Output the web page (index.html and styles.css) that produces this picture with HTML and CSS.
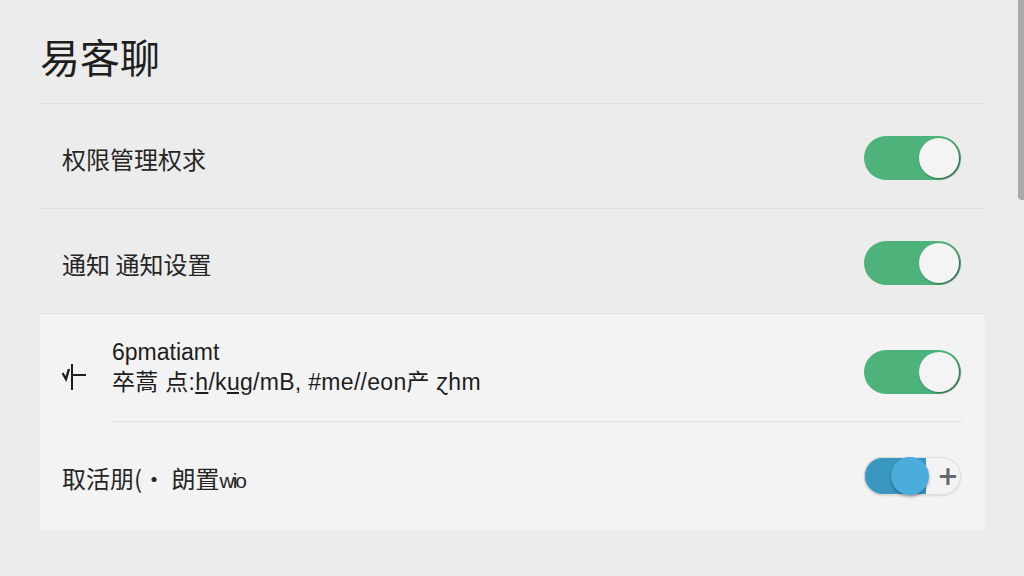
FILE: index.html
```html
<!DOCTYPE html>
<html lang="zh">
<head>
<meta charset="utf-8">
<title>易客聊</title>
<link rel="stylesheet" href="styles.css">
</head>
<body>
<div class="page">
  <header class="title-bar"><h1 class="title">易客聊</h1></header>
  <div class="row">
    <span class="label">权限管理权求</span>
    <span class="toggle on"><span class="knob"></span></span>
  </div>
  <div class="row">
    <span class="label">通知 通知设置</span>
    <span class="toggle on"><span class="knob"></span></span>
  </div>
  <div class="panel">
    <div class="row row-detail">
      <div class="detail">
        <svg class="detail-icon" width="26" height="28" viewBox="0 0 26 28">
          <path d="M0.5 10 L4 16 L7 6" fill="none" stroke="#1e1e1e" stroke-width="2.4" stroke-linejoin="miter"/>
          <path d="M10 1 V27" stroke="#1e1e1e" stroke-width="2"/>
          <path d="M10 12 H24" stroke="#1e1e1e" stroke-width="2"/>
        </svg>
        <div class="detail-text">
          <div class="line1">6pmatiamt</div>
          <div class="line2">卒蒿 点:<u>h</u>/k<u>ug</u>/mB, #me//eon产 ɀhm</div>
        </div>
      </div>
      <span class="toggle on"><span class="knob"></span></span>
    </div>
    <div class="inset-divider"></div>
    <div class="row row-last">
      <span class="label">取活朋(·&nbsp;朗置<span class="latin">wio</span></span>
      <span class="toggle blue"><span class="knob"></span><span class="plus">+</span></span>
    </div>
  </div>
</div>
<div class="scrollbar"></div>
</body>
</html>
```
FILE: styles.css
```css
html, body {
  margin: 0;
  padding: 0;
  background: #ececec;
}
body {
  width: 1024px;
  height: 576px;
  overflow: hidden;
  font-family: "Noto Sans CJK SC", "Liberation Sans", sans-serif;
  color: #262626;
}
.page {
  margin: 0 39px 0 40px;
}
.title-bar {
  box-sizing: border-box;
  height: 104px;
  padding-top: 8px;
  border-bottom: 1px solid #dedede;
  display: flex;
  align-items: center;
}
.title {
  margin: 0;
  font-size: 40px;
  font-weight: 400;
  line-height: 1;
  color: #1e1e1e;
}
.row {
  box-sizing: border-box;
  height: 105px;
  padding: 4px 24px 0 22px;
  border-bottom: 1px solid #dedede;
  display: flex;
  align-items: center;
  justify-content: space-between;
}
.label {
  font-size: 24px;
  line-height: 1;
  margin-top: 2px;
}
.toggle {
  box-sizing: border-box;
  width: 97px;
  height: 44px;
  border-radius: 22px;
  display: flex;
  align-items: center;
  padding: 2px;
}
.toggle.on {
  background: #4db37a;
  justify-content: flex-end;
}
.toggle.on .knob {
  width: 40px;
  height: 40px;
  border-radius: 50%;
  background: #f4f4f4;
  box-shadow: 1px 1px 2px rgba(0, 0, 0, 0.45);
}
.panel {
  background: #f3f3f3;
  height: 216px;
}
.row-detail {
  height: 107px;
  padding-top: 8px;
  border-bottom: none;
}
.detail {
  display: flex;
  align-items: center;
  gap: 24px;
  margin-top: -10px;
}
.detail-icon {
  margin-top: 20px;
}
.detail-text {
  font-family: "Liberation Sans", "Noto Sans CJK SC", sans-serif;
  font-size: 23px;
  line-height: 30px;
  color: #1e1e1e;
}
.line2 {
  letter-spacing: 0.3px;
}
.detail-text u {
  text-underline-offset: 2px;
}
.inset-divider {
  height: 1px;
  margin: 0 22px 0 70px;
  background: #e3e3e3;
}
.row-last {
  height: 108px;
  border-bottom: none;
  padding-top: 0;
}
.row-last .label {
  margin-top: 4px;
}
.latin {
  font-family: "Liberation Sans", sans-serif;
  font-size: 21px;
  letter-spacing: -2px;
}
.toggle.blue {
  height: 38px;
  padding: 0 0 0 27px;
  border-radius: 19px;
  background: linear-gradient(to right, #3a97bf 0, #3a97bf 62px, #f3f3f3 62px);
  box-shadow: inset 0 0 0 1px #dcdcdc, 0 1px 2px rgba(0, 0, 0, 0.12);
}
.toggle.blue .knob {
  width: 38px;
  height: 38px;
  border-radius: 50%;
  background: #4aaddb;
  box-shadow: 0 2px 3px rgba(0, 0, 0, 0.3);
}
.plus {
  margin-left: 8px;
  font-family: "DejaVu Sans", sans-serif;
  font-size: 26px;
  line-height: 1;
  color: #666a70;
  font-weight: bold;
}
.scrollbar {
  position: absolute;
  top: 0;
  right: 0;
  width: 6px;
  height: 200px;
  background: #a9a9a9;
  border-radius: 0 0 0 4px;
}
```
